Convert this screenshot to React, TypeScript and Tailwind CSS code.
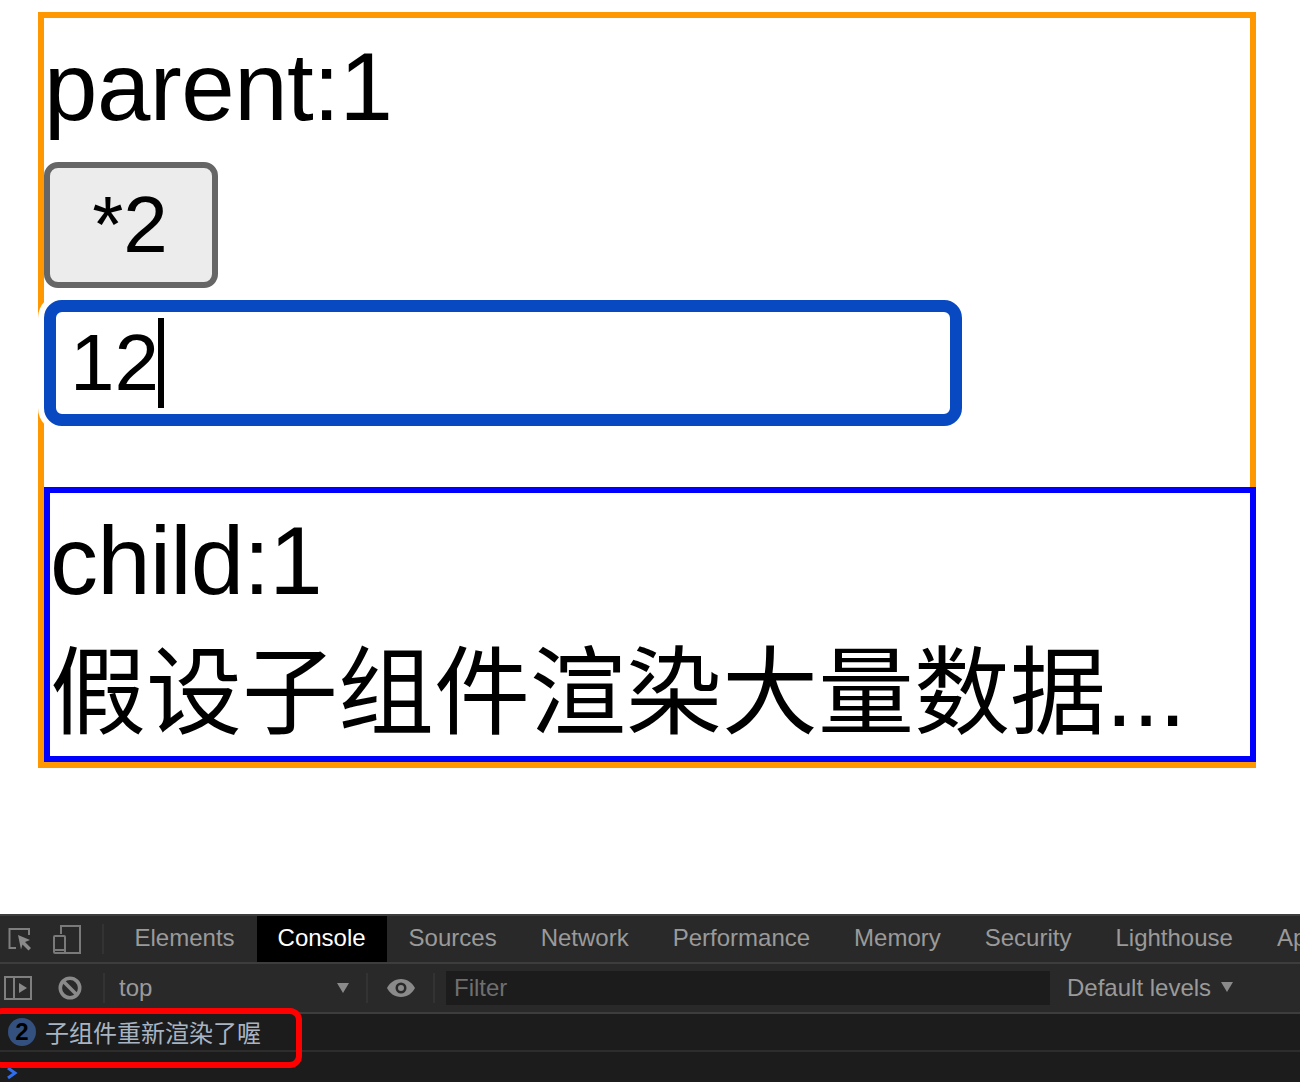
const tabs = ["Elements", "Console", "Sources", "Network", "Performance", "Memory", "Security", "Lighthouse", "Application"];

function InspectIcon() {
  return (
    <svg width="26" height="26" viewBox="0 0 26 26" fill="none" className="ml-[7px] shrink-0">
      <path d="M22 9V3H2.500V22H9" stroke="#7f7f7f" strokeWidth="2" fill="none" />
      <path d="M11 9l12 5-5 2 6 6-2.500 2.500-6-6-1.500 5z" fill="#8a8a8a" />
    </svg>
  );
}

function DeviceIcon() {
  return (
    <svg width="28" height="30" viewBox="0 0 28 30" fill="none" className="ml-5 shrink-0">
      <path d="M8 10V2h19v27H3" stroke="#7a7a7a" strokeWidth="2" />
      <rect x="1" y="12" width="11" height="17" rx="1" stroke="#7a7a7a" strokeWidth="2" />
      <path d="M1 26h11" stroke="#7a7a7a" strokeWidth="2" />
    </svg>
  );
}

function SidebarIcon() {
  return (
    <svg width="28" height="24" viewBox="0 0 28 24" fill="none" className="ml-[4px] shrink-0">
      <rect x="1" y="1" width="26" height="22" stroke="#7f7f7f" strokeWidth="2" />
      <path d="M10 1v22" stroke="#7f7f7f" strokeWidth="2" />
      <path d="M15 7l8 5-8 5z" fill="#8a8a8a" />
    </svg>
  );
}

function BlockIcon() {
  return (
    <svg width="24" height="24" viewBox="0 0 24 24" fill="none" className="ml-[26px] shrink-0">
      <circle cx="12" cy="12" r="9.700" stroke="#8a8a8a" strokeWidth="3.600" />
      <path d="M5 5l14 14" stroke="#8a8a8a" strokeWidth="3.600" />
    </svg>
  );
}

function EyeIcon() {
  return (
    <svg width="30" height="20" viewBox="0 0 30 20" className="shrink-0">
      <path
        fillRule="evenodd"
        d="M15 1C8.500 1 3.500 5 1 10c2.500 5 7.500 9 14 9s11.500-4 14-9c-2.500-5-7.500-9-14-9zm0 3.500a5.500 5.500 0 1 1 0 11 5.500 5.500 0 0 1 0-11z"
        fill="#8a8a8a"
      />
      <circle cx="15" cy="10" r="3" fill="#8a8a8a" />
    </svg>
  );
}

function Caret() {
  return (
    <svg width="12" height="10" viewBox="0 0 12 10" className="shrink-0">
      <path d="M0 0h12L6 10z" fill="#8a8a8a" />
    </svg>
  );
}

function Divider() {
  return <div className="h-[30px] w-0.5 shrink-0 bg-[#333333]" />;
}

export default function App() {
  return (
    <div className="relative flex h-[1082px] flex-col overflow-hidden bg-white font-['Liberation_Sans','Noto_Sans_CJK_SC',sans-serif] text-black">
      <div className="ml-[38px] mt-3 h-[756px] w-[1218px] border-[6px] border-[#ff9800]">
        <div className="h-[144px] text-[96px] leading-[138px] tracking-[-0.5px]">parent:1</div>
        <button className="block h-[126px] w-[174px] rounded-[14px] border-[6px] border-[#666666] bg-[#ececec] pr-0.5 text-[80px] leading-none">
          *2
        </button>
        <div className="relative mt-3 h-[126px] w-[918px]">
          <input
            readOnly
            value="12"
            className="h-full w-full rounded-[18px] border-[12px] border-[#0849c1] bg-white pl-[14px] text-[80px] shadow-[0_0_0_6px_#ffffff] outline-none"
          />
          <div className="absolute left-[114px] top-[18px] h-[90px] w-1.5 bg-black" />
        </div>
        <div className="mt-[61px] h-[275px] w-[1212px] border-[6px] border-[#0000ff]">
          <div className="text-[96px] leading-[135px] tracking-[-0.8px]">child:1</div>
          <div className="text-[96px] leading-[130px]">假设子组件渲染大量数据...</div>
        </div>
      </div>

      <div className="mt-auto flex h-[168px] flex-col bg-[#1c1c1c] text-[24px] text-[#9a9a9a]">
        <div className="flex h-12 shrink-0 items-center overflow-hidden border-t-2 border-[#3d3d3d] bg-[#292929]">
          <InspectIcon />
          <DeviceIcon />
          <div className="ml-[21px] h-[30px] w-0.5 shrink-0 bg-[#333333]" />
          <div className="ml-[8.500px] flex h-full">
            {tabs.map((tab) => (
              <div
                key={tab}
                className={
                  tab === "Console"
                    ? "flex h-full items-center bg-black px-[21px] pb-0.5 text-white"
                    : "flex h-full items-center px-[22px] pb-0.5"
                }
              >
                {tab}
              </div>
            ))}
          </div>
        </div>
        <div className="flex h-[52px] shrink-0 items-center border-y-2 border-[#3d3d3d] bg-[#292929]">
          <SidebarIcon />
          <BlockIcon />
          <div className="ml-[21px] shrink-0"><Divider /></div>
          <span className="ml-[14px] w-[218px] shrink-0">top</span>
          <Caret />
          <div className="ml-[17px] shrink-0"><Divider /></div>
          <div className="ml-[18px] shrink-0"><EyeIcon /></div>
          <div className="ml-[17px] shrink-0"><Divider /></div>
          <div className="ml-[11px] flex h-[34px] w-[604px] shrink-0 items-center bg-[#1c1c1c] pl-2 text-[#6f6f6f]">
            Filter
          </div>
          <span className="ml-[17px] shrink-0">Default levels</span>
          <div className="ml-[10px] -translate-y-[1px]"><Caret /></div>
        </div>
        <div className="flex h-[38px] shrink-0 items-center border-b-2 border-[#2d2d2d] pl-2 pt-1">
          <div className="flex h-7 w-7 shrink-0 -translate-y-0.5 items-center justify-center rounded-full bg-[#34507f] text-[24px] font-bold leading-none text-black">
            2
          </div>
          <span className="ml-[9px] text-[#a9b4c2]">子组件重新渲染了喔</span>
        </div>
        <div className="flex flex-1 items-end pb-[3px] pl-[6px]">
          <svg width="12" height="12" viewBox="0 0 12 12" fill="none">
            <path d="M2 1l7 5-7 5" stroke="#2f6fed" strokeWidth="3" />
          </svg>
        </div>
      </div>

      <div className="absolute left-[-10px] top-[1008px] h-[60px] w-[312px] rounded-[12px] border-[6px] border-[#ff0000]" />
    </div>
  );
}
